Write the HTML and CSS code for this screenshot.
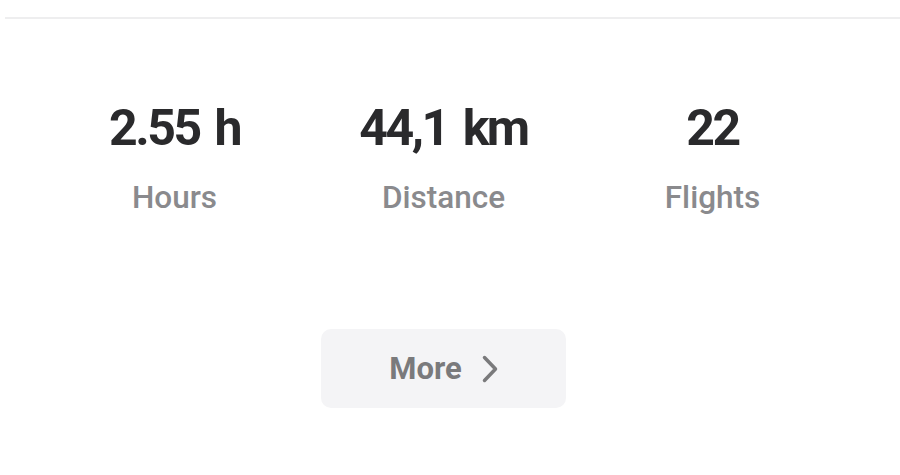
FILE: index.html
```html
<!DOCTYPE html>
<html>
<head>
    <title>Summary</title>
    <link rel="stylesheet" href="styles.css">
</head>
<body>
    <div class="summary">
        <div class="divider"></div>
        <div class="stats">
            <div class="stat">
                <div class="value">2.55 h</div>
                <div class="label">Hours</div>
            </div>
            <div class="stat">
                <div class="value">44,1 km</div>
                <div class="label">Distance</div>
            </div>
            <div class="stat">
                <div class="value">22</div>
                <div class="label">Flights</div>
            </div>
        </div>
        <div class="actions">
            <button class="more">
                More
                <svg class="chevron" width="16" height="28" viewBox="0 0 16 28">
                    <path d="M2.5 2.5 L13.5 14 L2.5 25.5" fill="none" stroke="currentColor" stroke-width="3.5" stroke-linecap="round" stroke-linejoin="round"/>
                </svg>
            </button>
        </div>
    </div>
</body>
</html>
```

FILE: styles.css
```css
body {
    margin: 0;
    background: #fff;
    font-family: Roboto, "Liberation Sans", sans-serif;
}

.summary {
    width: 900px;
    height: 475px;
    padding-top: 17px;
    box-sizing: border-box;
}

.divider {
    height: 2px;
    margin-left: 5px;
    background-color: #eeeeef;
}

.stats {
    display: grid;
    grid-template-columns: repeat(3, 269px);
    padding-left: 40px;
    margin-top: 79px;
}

.stat {
    display: flex;
    flex-direction: column;
    align-items: center;
}

.value {
    font-size: 50px;
    font-weight: 700;
    color: #2a2a2c;
    line-height: 60px;
    letter-spacing: -2.5px;
    word-spacing: 5px;
}

.label {
    margin-top: 20px;
    font-size: 31.5px;
    font-weight: 500;
    color: #8a8a8d;
    line-height: 40px;
}

.actions {
    display: flex;
    padding-left: 321px;
    margin-top: 111px;
}

.more {
    width: 245px;
    height: 79px;
    padding: 0;
    border: none;
    border-radius: 10px;
    background-color: #f4f4f6;
    color: #7a7a7c;
    font-family: inherit;
    font-size: 31px;
    font-weight: 700;
    display: flex;
    align-items: center;
    justify-content: center;
    gap: 20px;
    cursor: pointer;
}

.chevron {
    margin-top: 1px;
}
```
